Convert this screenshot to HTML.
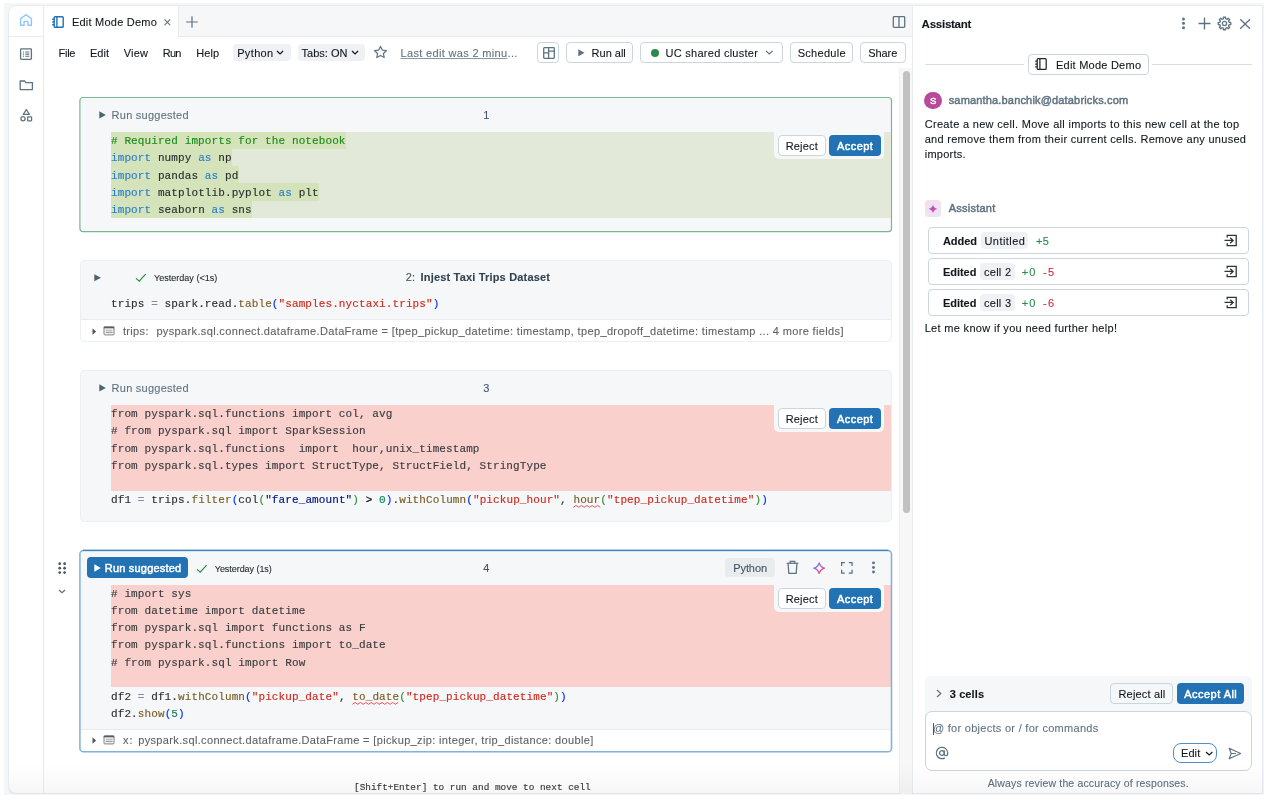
<!DOCTYPE html>
<html><head><meta charset="utf-8"><title>Edit Mode Demo</title>
<style>
#root{left:0;top:0;width:1266px;height:800px;will-change:transform;}
html,body{margin:0;padding:0;background:#fff;}
body{width:1266px;height:800px;overflow:hidden;position:relative;font-family:"Liberation Sans",sans-serif;}
div,span,svg{position:absolute;box-sizing:border-box;}
.t{font-family:"Liberation Sans",sans-serif;white-space:pre;-webkit-text-stroke:0.1px;}
.m{font-family:"Liberation Mono",monospace;white-space:pre;-webkit-text-stroke:0.15px;}
.m i,.t i{font-style:normal;position:static;}
</style></head><body><div id="root">
<div style="left:4px;top:3px;width:1260px;height:792px;background:#f4f6f8;"></div><div style="left:8px;top:5px;width:1255px;height:789px;background:#fff;border:1px solid #e8ecf0;border-radius:8px 0 0 8px;"></div><div style="left:43px;top:6px;width:1px;height:788px;background:#e8ecf0;"></div><div style="left:9px;top:36px;width:34px;height:1px;background:#e8ecf0;"></div><svg style="left:19px;top:13px;" width="14" height="14" viewBox="0 0 14 14"><path d="M1.6 5.6 L7 1.7 L12.4 5.6 V12.2 H8.9 V8.4 H5.1 V12.2 H1.6 Z" fill="none" stroke="#8cc8ff" stroke-width="1.4" stroke-linejoin="round"/></svg><svg style="left:19px;top:47px;" width="14" height="14" viewBox="0 0 14 14"><rect x="1.6" y="1.9" width="10.8" height="10.4" rx="0.8" fill="none" stroke="#5f7281" stroke-width="1.3"/><path d="M4 5h1M6.3 5h4M4 7.1h1M6.3 7.1h4M4 9.2h1M6.3 9.2h4" stroke="#5f7281" stroke-width="1.1"/></svg><svg style="left:19px;top:78px;" width="15" height="14" viewBox="0 0 15 14"><path d="M1.2 3 H5.6 L7 4.6 H13.4 V11.6 H1.2 Z" fill="none" stroke="#5f7281" stroke-width="1.3" stroke-linejoin="round"/></svg><svg style="left:19px;top:108px;" width="15" height="15" viewBox="0 0 15 15"><path d="M7.3 1.5 L10.3 6.4 H4.3 Z" fill="none" stroke="#5f7281" stroke-width="1.25" stroke-linejoin="round"/><circle cx="4" cy="10.8" r="2.1" fill="none" stroke="#5f7281" stroke-width="1.25"/><rect x="8.6" y="8.8" width="4" height="4" rx="0.5" fill="none" stroke="#5f7281" stroke-width="1.25"/></svg><div style="left:44px;top:6px;width:868px;height:30px;background:#f6f7f9;"></div><div style="left:44px;top:36px;width:868px;height:1px;background:#e8ecf0;"></div><div style="left:44px;top:6px;width:134px;height:31px;background:#fff;"></div><div style="left:178px;top:6px;width:1px;height:30px;background:#e8ecf0;"></div><svg style="left:51px;top:14.7px;" width="14" height="14" viewBox="0 0 14 14"><rect x="3.2" y="1.7" width="9" height="10.6" rx="0.9" fill="none" stroke="#2272b4" stroke-width="1.4"/><path d="M5.9 1.7V12.3" stroke="#2272b4" stroke-width="1.4"/><path d="M1.2 4.2H3.2M1.2 7H3.2M1.2 9.8H3.2" stroke="#2272b4" stroke-width="1.4"/></svg><span class="t" style="left:71.90px;top:16.89px;font-size:11px;line-height:11px;color:#11171c;letter-spacing:0.236px;">Edit Mode Demo</span><svg style="left:163px;top:17.5px;" width="9" height="9" viewBox="0 0 9 9"><path d="M1.5 1.4 L7.2 7.2 M7.2 1.4 L1.5 7.2" stroke="#5f7281" stroke-width="1.1" fill="none"/></svg><svg style="left:185px;top:15px;" width="14" height="14" viewBox="0 0 14 14"><path d="M7 1.2V12.8M1.2 7H12.8" stroke="#5f7281" stroke-width="1.2"/></svg><svg style="left:891.5px;top:14.8px;" width="14" height="14" viewBox="0 0 14 14"><rect x="1.3" y="1.6" width="11.4" height="10.8" rx="0.8" fill="none" stroke="#5f7281" stroke-width="1.3"/><path d="M7 1.6V12.4" stroke="#5f7281" stroke-width="1.3"/></svg><span class="t" style="left:58.40px;top:48.09px;font-size:11px;line-height:11px;color:#11171c;letter-spacing:-0.211px;">File</span><span class="t" style="left:90.00px;top:48.09px;font-size:11px;line-height:11px;color:#11171c;letter-spacing:0.010px;">Edit</span><span class="t" style="left:123.70px;top:48.09px;font-size:11px;line-height:11px;color:#11171c;letter-spacing:0.215px;">View</span><span class="t" style="left:162.70px;top:48.09px;font-size:11px;line-height:11px;color:#11171c;letter-spacing:-0.744px;">Run</span><span class="t" style="left:196.30px;top:48.09px;font-size:11px;line-height:11px;color:#11171c;letter-spacing:0.025px;">Help</span><div style="left:233.4px;top:44px;width:57.2px;height:17px;background:#eff1f4;border-radius:4px;"></div><span class="t" style="left:237.20px;top:48.09px;font-size:11px;line-height:11px;color:#11171c;letter-spacing:0.350px;">Python</span><svg style="left:276.3px;top:49.8px;" width="8.1" height="5.5" viewBox="0 0 8.1 5.5"><path d="M1 1 L4.05 3.9 L7.1 1" fill="none" stroke="#11171c" stroke-width="1.25"/></svg><div style="left:297.7px;top:44px;width:67.1px;height:17px;background:#eff1f4;border-radius:4px;"></div><span class="t" style="left:301.60px;top:48.09px;font-size:11px;line-height:11px;color:#11171c;letter-spacing:0.006px;">Tabs: ON</span><svg style="left:351.3px;top:49.8px;" width="8.1" height="5.5" viewBox="0 0 8.1 5.5"><path d="M1 1 L4.05 3.9 L7.1 1" fill="none" stroke="#11171c" stroke-width="1.25"/></svg><svg style="left:373px;top:45px;" width="15" height="14" viewBox="0 0 15 14"><path d="M7.5 1.4 L9.3 5.1 L13.4 5.7 L10.4 8.5 L11.2 12.5 L7.5 10.5 L3.8 12.5 L4.6 8.5 L1.6 5.7 L5.7 5.1 Z" fill="none" stroke="#5f7281" stroke-width="1.25" stroke-linejoin="round"/></svg><span class="t" style="left:400.50px;top:48.09px;font-size:11px;line-height:11px;color:#5f7281;letter-spacing:0.338px;"><i style="text-decoration:underline;text-underline-offset:0.6px;text-decoration-thickness:0.9px;text-decoration-color:#8898a5">Last edit was 2 minu</i>...</span><div style="left:537px;top:42px;width:22px;height:21px;background:#fff;border:1px solid #cbd5de;border-radius:4px;"></div><svg style="left:541.5px;top:45.7px;" width="14" height="14" viewBox="0 0 14 14"><rect x="1.7" y="1.7" width="10.6" height="10.6" rx="0.7" fill="none" stroke="#5f7281" stroke-width="1.3"/><path d="M6.6 1.7V12.3M1.7 6.8H6.6M6.6 5.2H12.3" stroke="#5f7281" stroke-width="1.3"/></svg><div style="left:566px;top:42px;width:67px;height:21px;background:#fff;border:1px solid #cbd5de;border-radius:4px;"></div><svg style="left:578.3px;top:48.8px;" width="6.7" height="7.7" viewBox="0 0 6.7 7.7"><path d="M0.3 0.3 L6.5 3.85 L0.3 7.4 Z" fill="#5f7281"/></svg><span class="t" style="left:591.60px;top:48.09px;font-size:11px;line-height:11px;color:#11171c;letter-spacing:-0.008px;">Run all</span><div style="left:640px;top:42px;width:143px;height:21px;background:#fff;border:1px solid #cbd5de;border-radius:4px;"></div><div style="left:651px;top:48.6px;width:8px;height:8px;border-radius:50%;background:#2b8a4a;"></div><span class="t" style="left:665.60px;top:48.09px;font-size:11px;line-height:11px;color:#11171c;letter-spacing:0.266px;">UC shared cluster</span><svg style="left:764.6px;top:50.2px;" width="8.6" height="5.6" viewBox="0 0 8.6 5.6"><path d="M1 1 L4.3 3.9999999999999996 L7.6 1" fill="none" stroke="#5f7281" stroke-width="1.1"/></svg><div style="left:790px;top:42px;width:63px;height:21px;background:#fff;border:1px solid #cbd5de;border-radius:4px;"></div><span class="t" style="left:797.70px;top:48.09px;font-size:11px;line-height:11px;color:#11171c;letter-spacing:0.289px;">Schedule</span><div style="left:860px;top:42px;width:46px;height:21px;background:#fff;border:1px solid #cbd5de;border-radius:4px;"></div><span class="t" style="left:868.20px;top:48.09px;font-size:11px;line-height:11px;color:#11171c;letter-spacing:-0.065px;">Share</span><div style="left:899px;top:68px;width:13px;height:726px;background:#f7f7f7;border-left:1px solid #efefef;"></div><div style="left:903px;top:70.5px;width:7px;height:442.5px;background:#c1c1c1;border-radius:3.5px;"></div><div style="left:80px;top:98px;width:811.5px;height:133.4px;background:#f6f7f9;border-radius:4px;"></div><svg style="left:77px;top:95px;" width="818" height="140" viewBox="0 0 818 140"><rect x="2.9" y="2.5" width="811.6" height="134.1" rx="3" fill="none" stroke="#7ab693" stroke-width="1.2"/></svg><svg style="left:98.8px;top:111.3px;" width="7" height="7.8" viewBox="0 0 7 7.8"><path d="M0.3 0.3 L6.8 3.9 L0.3 7.5 Z" fill="#4c6373"/></svg><span class="t" style="left:111.60px;top:110.39px;font-size:11px;line-height:11px;color:#5f7281;letter-spacing:0.250px;">Run suggested</span><span class="t" style="left:483.20px;top:110.39px;font-size:11px;line-height:11px;color:#445461;">1</span><div style="left:111px;top:132px;width:780px;height:85.60000000000001px;background:#e2e9d8;"></div><div style="left:111px;top:132.0px;width:234.8px;height:17.17px;background:#d4e3b9;"></div><div style="left:111px;top:149.12px;width:120.9px;height:17.17px;background:#d4e3b9;"></div><div style="left:111px;top:166.24px;width:127.6px;height:17.17px;background:#d4e3b9;"></div><div style="left:111px;top:183.36px;width:208.00000000000003px;height:17.17px;background:#d4e3b9;"></div><div style="left:111px;top:200.48000000000002px;width:141.00000000000003px;height:17.17px;background:#d4e3b9;"></div><span class="m" style="left:111.00px;top:136.27px;font-size:11px;line-height:11px;color:#2b2f33;letter-spacing:0.1px;"><i style="color:#1c8c1c"># Required imports for the notebook</i></span><span class="m" style="left:111.00px;top:153.39px;font-size:11px;line-height:11px;color:#2b2f33;letter-spacing:0.1px;"><i style="color:#2b7fcf">import</i> numpy <i style="color:#2b7fcf">as</i> np</span><span class="m" style="left:111.00px;top:170.51px;font-size:11px;line-height:11px;color:#2b2f33;letter-spacing:0.1px;"><i style="color:#2b7fcf">import</i> pandas <i style="color:#2b7fcf">as</i> pd</span><span class="m" style="left:111.00px;top:187.63px;font-size:11px;line-height:11px;color:#2b2f33;letter-spacing:0.1px;"><i style="color:#2b7fcf">import</i> matplotlib.pyplot <i style="color:#2b7fcf">as</i> plt</span><span class="m" style="left:111.00px;top:204.75px;font-size:11px;line-height:11px;color:#2b2f33;letter-spacing:0.1px;"><i style="color:#2b7fcf">import</i> seaborn <i style="color:#2b7fcf">as</i> sns</span><div style="left:773.9px;top:132px;width:110.4px;height:27.2px;background:#f6f7f9;border-radius:0 0 5px 5px;"></div><div style="left:778px;top:135px;width:47.5px;height:21.3px;background:#fff;border:1px solid #cbd5de;border-radius:4px;"></div><span class="t" style="left:785.70px;top:141.19px;font-size:11px;line-height:11px;color:#11171c;letter-spacing:0.183px;">Reject</span><div style="left:829.2px;top:135.3px;width:51.5px;height:20.9px;background:#2272b4;border-radius:4px;"></div><span class="t" style="left:837.10px;top:141.19px;font-size:11px;line-height:11px;-webkit-text-stroke:0.45px #fff;color:#fff;letter-spacing:0.432px;">Accept</span><div style="left:79.5px;top:259.8px;width:812px;height:82.6px;background:#fff;border:1px solid #ebeff2;border-radius:4.5px;"></div><div style="left:80.5px;top:260.8px;width:810px;height:58.2px;background:#f6f7f9;border-radius:3.5px 3.5px 0 0;"></div><div style="left:80.5px;top:319px;width:810px;height:1px;background:#e8ecf0;"></div><svg style="left:94.2px;top:274.1px;" width="7.3" height="7.5" viewBox="0 0 7.3 7.5"><path d="M0.3 0.3 L7.1 3.75 L0.3 7.2 Z" fill="#4c6373"/></svg><svg style="left:135.3px;top:273px;" width="12" height="10" viewBox="0 0 12 10"><path d="M1 5.4 L4.2 8.2 L10.6 1.2" fill="none" stroke="#2b8a4a" stroke-width="1.15"/></svg><span class="t" style="left:154.00px;top:274.18px;font-size:9px;line-height:9px;color:#1f272d;letter-spacing:0.018px;">Yesterday (&lt;1s)</span><span class="t" style="left:405.70px;top:272.39px;font-size:11px;line-height:11px;color:#445461;letter-spacing:0.312px;">2:</span><span class="t" style="left:420.50px;top:272.39px;font-size:11px;line-height:11px;font-weight:700;color:#33434f;letter-spacing:0.182px;">Injest Taxi Trips Dataset</span><span class="m" style="left:111.00px;top:298.87px;font-size:11px;line-height:11px;color:#2b2f33;letter-spacing:0.1px;">trips <i style="color:#7a8fa3">=</i> spark.read.<i style="color:#795e26">table</i><i style="color:#0431fa">(</i><i style="color:#d12a1d">&quot;samples.nyctaxi.trips&quot;</i><i style="color:#0431fa">)</i></span><svg style="left:91.5px;top:327.5px;" width="5" height="7.2" viewBox="0 0 5 7.2"><path d="M0.5 0.5 L4.2 3.6 L0.5 6.7 Z" fill="#555"/></svg><svg style="left:102.9px;top:325.6px;" width="12" height="10" viewBox="0 0 12 10"><rect x="1" y="0.9" width="10" height="8" rx="0.9" fill="#fdfdfd" stroke="#707070" stroke-width="0.9"/><path d="M0.8 1.5H11.2" stroke="#5c5c5c" stroke-width="1.7"/><path d="M2.6 4.2H9.6" stroke="#a5a5a5" stroke-width="1"/><path d="M2.6 6.4H9.6" stroke="#a0a0a0" stroke-width="1.5"/></svg><span class="t" style="left:122.90px;top:325.79px;font-size:11px;line-height:11px;color:#616161;letter-spacing:0.351px;">trips:</span><span class="t" style="left:156.40px;top:325.79px;font-size:11px;line-height:11px;color:#616161;letter-spacing:0.357px;">pyspark.sql.connect.dataframe.DataFrame = [tpep_pickup_datetime: timestamp, tpep_dropoff_datetime: timestamp ... 4 more fields]</span><div style="left:79.5px;top:370.3px;width:812px;height:151.3px;background:#f6f7f9;border:1px solid #ebeff2;border-radius:4.5px;"></div><svg style="left:98.7px;top:384.4px;" width="7" height="7.8" viewBox="0 0 7 7.8"><path d="M0.3 0.3 L6.8 3.9 L0.3 7.5 Z" fill="#4c6373"/></svg><span class="t" style="left:111.60px;top:383.19px;font-size:11px;line-height:11px;color:#5f7281;letter-spacing:0.250px;">Run suggested</span><span class="t" style="left:483.20px;top:383.19px;font-size:11px;line-height:11px;color:#445461;">3</span><div style="left:111px;top:405px;width:780px;height:85.60000000000001px;background:#f9d0cc;"></div><span class="m" style="left:111.00px;top:409.37px;font-size:11px;line-height:11px;color:#2b2f33;letter-spacing:0.1px;"><i style="color:#3a3d40">from pyspark.sql.functions import col, avg</i></span><span class="m" style="left:111.00px;top:426.49px;font-size:11px;line-height:11px;color:#2b2f33;letter-spacing:0.1px;"><i style="color:#3a3d40"># from pyspark.sql import SparkSession</i></span><span class="m" style="left:111.00px;top:443.61px;font-size:11px;line-height:11px;color:#2b2f33;letter-spacing:0.1px;"><i style="color:#3a3d40">from pyspark.sql.functions  import  hour,unix_timestamp</i></span><span class="m" style="left:111.00px;top:460.73px;font-size:11px;line-height:11px;color:#2b2f33;letter-spacing:0.1px;"><i style="color:#3a3d40">from pyspark.sql.types import StructType, StructField, StringType</i></span><span class="m" style="left:111.00px;top:494.97px;font-size:11px;line-height:11px;color:#2b2f33;letter-spacing:0.1px;">df1 <i style="color:#7a8fa3">=</i> trips.<i style="color:#795e26">filter</i><i style="color:#0431fa">(</i>col<i style="color:#319331">(</i><i style="color:#001080">&quot;fare_amount&quot;</i><i style="color:#319331">)</i><i style="color:#000"> &gt; </i><i style="color:#098658">0</i><i style="color:#0431fa">)</i>.<i style="color:#795e26">withColumn</i><i style="color:#0431fa">(</i><i style="color:#d12a1d">&quot;pickup_hour&quot;</i>, <i style="color:#795e26">hour</i><i style="color:#319331">(</i><i style="color:#d12a1d">&quot;tpep_pickup_datetime&quot;</i><i style="color:#319331">)</i><i style="color:#0431fa">)</i></span><svg style="left:572.5999999999999px;top:505.20000000000005px;" width="28.8" height="3.2" viewBox="0 0 28.8 3.2"><path d="M0.30 2.30 L3.00 0.50 L5.70 2.30 L8.40 0.50 L11.10 2.30 L13.80 0.50 L16.50 2.30 L19.20 0.50 L21.90 2.30 L24.60 0.50 L27.30 2.30" fill="none" stroke="#e8525c" stroke-width="1" stroke-linejoin="round"/></svg><div style="left:773.9px;top:405px;width:110.4px;height:27.2px;background:#f6f7f9;border-radius:0 0 5px 5px;"></div><div style="left:778px;top:408px;width:47.5px;height:21.3px;background:#fff;border:1px solid #cbd5de;border-radius:4px;"></div><span class="t" style="left:785.70px;top:414.19px;font-size:11px;line-height:11px;color:#11171c;letter-spacing:0.183px;">Reject</span><div style="left:829.2px;top:408.3px;width:51.5px;height:20.9px;background:#2272b4;border-radius:4px;"></div><span class="t" style="left:837.10px;top:414.19px;font-size:11px;line-height:11px;-webkit-text-stroke:0.45px #fff;color:#fff;letter-spacing:0.432px;">Accept</span><div style="left:80px;top:550.4px;width:811.5px;height:201px;background:#fff;border-radius:4px;"></div><div style="left:80px;top:550.4px;width:811.5px;height:178.6px;background:#f6f7f9;border-radius:3.5px 3.5px 0 0;"></div><div style="left:80px;top:729px;width:811.5px;height:1px;background:#e8ecf0;"></div><svg style="left:58px;top:561.9px;" width="9" height="13" viewBox="0 0 9 13"><circle cx="1.7" cy="1.7" r="1.35" fill="#445461"/><circle cx="1.7" cy="6.15" r="1.35" fill="#445461"/><circle cx="1.7" cy="10.6" r="1.35" fill="#445461"/><circle cx="6.6000000000000005" cy="1.7" r="1.35" fill="#445461"/><circle cx="6.6000000000000005" cy="6.15" r="1.35" fill="#445461"/><circle cx="6.6000000000000005" cy="10.6" r="1.35" fill="#445461"/></svg><svg style="left:58.3px;top:589.3px;" width="8" height="5.4" viewBox="0 0 8 5.4"><path d="M1 1 L4.0 3.8000000000000003 L7 1" fill="none" stroke="#5f7281" stroke-width="1.2"/></svg><div style="left:86.9px;top:557.3px;width:101.5px;height:20.5px;background:#2272b4;border-radius:4px;"></div><svg style="left:94.3px;top:563.8px;" width="7" height="8" viewBox="0 0 7 8"><path d="M0.3 0.3 L6.8 4.0 L0.3 7.7 Z" fill="#fff"/></svg><span class="t" style="left:104.80px;top:562.89px;font-size:11px;line-height:11px;-webkit-text-stroke:0.45px #fff;color:#fff;letter-spacing:0.200px;">Run suggested</span><svg style="left:196.2px;top:563.8px;" width="12" height="10" viewBox="0 0 12 10"><path d="M1 5.4 L4.2 8.2 L10.6 1.2" fill="none" stroke="#2b8a4a" stroke-width="1.15"/></svg><span class="t" style="left:214.80px;top:564.78px;font-size:9px;line-height:9px;color:#1f272d;letter-spacing:-0.054px;">Yesterday (1s)</span><span class="t" style="left:483.20px;top:562.99px;font-size:11px;line-height:11px;color:#445461;">4</span><div style="left:725.3px;top:557.6px;width:49.3px;height:19.8px;background:#e8ecef;border-radius:4px;"></div><span class="t" style="left:733.20px;top:562.79px;font-size:11px;line-height:11px;color:#445461;letter-spacing:-0.070px;">Python</span><svg style="left:785.5px;top:560.2px;" width="13" height="15" viewBox="0 0 13 15"><path d="M0.6 3.3H12.4" stroke="#5f7281" stroke-width="1.25"/><path d="M4.2 3.2V1.3H8.8V3.2" fill="none" stroke="#5f7281" stroke-width="1.25"/><path d="M2.1 3.6 L2.8 13.4 H10.2 L10.9 3.6" fill="none" stroke="#5f7281" stroke-width="1.25" stroke-linejoin="round"/></svg><svg style="left:813.2px;top:561.6px" width="12.4" height="12.4" viewBox="0 0 12.4 12.4"><defs><linearGradient id="sg" x1="0.1" y1="0.1" x2="0.9" y2="0.9"><stop offset="0" stop-color="#4f7cff"/><stop offset="0.5" stop-color="#b45ad0"/><stop offset="1" stop-color="#ff4f3a"/></linearGradient></defs><path d="M6.2 0.9 C7 3.7 8.7 5.4 11.5 6.2 C8.7 7 7 8.7 6.2 11.5 C5.4 8.7 3.7 7 0.9 6.2 C3.7 5.4 5.4 3.7 6.2 0.9 Z" fill="none" stroke="url(#sg)" stroke-width="1.25" stroke-linejoin="round"/></svg><svg style="left:840.6px;top:561.9px;" width="12" height="12" viewBox="0 0 12 12"><path d="M0.65 3.9V0.65H3.9M7.8 0.65H11.05V3.9M11.05 7.8V11.05H7.8M3.9 11.05H0.65V7.8" fill="none" stroke="#5f7281" stroke-width="1.3"/></svg><svg style="left:871.4px;top:561.4px;" width="5" height="13" viewBox="0 0 5 13"><circle cx="2.5" cy="1.9" r="1.45" fill="#5f7281"/><circle cx="2.5" cy="6.449999999999999" r="1.45" fill="#5f7281"/><circle cx="2.5" cy="11.0" r="1.45" fill="#5f7281"/></svg><div style="left:111px;top:584.8px;width:779.8px;height:102.2px;background:#f9d0cc;"></div><span class="m" style="left:111.00px;top:589.07px;font-size:11px;line-height:11px;color:#2b2f33;letter-spacing:0.1px;"><i style="color:#3a3d40"># import sys</i></span><span class="m" style="left:111.00px;top:606.19px;font-size:11px;line-height:11px;color:#2b2f33;letter-spacing:0.1px;"><i style="color:#3a3d40">from datetime import datetime</i></span><span class="m" style="left:111.00px;top:623.31px;font-size:11px;line-height:11px;color:#2b2f33;letter-spacing:0.1px;"><i style="color:#3a3d40">from pyspark.sql import functions as F</i></span><span class="m" style="left:111.00px;top:640.43px;font-size:11px;line-height:11px;color:#2b2f33;letter-spacing:0.1px;"><i style="color:#3a3d40">from pyspark.sql.functions import to_date</i></span><span class="m" style="left:111.00px;top:657.55px;font-size:11px;line-height:11px;color:#2b2f33;letter-spacing:0.1px;"><i style="color:#3a3d40"># from pyspark.sql import Row</i></span><span class="m" style="left:111.00px;top:691.79px;font-size:11px;line-height:11px;color:#2b2f33;letter-spacing:0.1px;">df2 <i style="color:#7a8fa3">=</i> df1.<i style="color:#795e26">withColumn</i><i style="color:#0431fa">(</i><i style="color:#d12a1d">&quot;pickup_date&quot;</i>, <i style="color:#795e26">to_date</i><i style="color:#319331">(</i><i style="color:#d12a1d">&quot;tpep_pickup_datetime&quot;</i><i style="color:#319331">)</i><i style="color:#0431fa">)</i></span><svg style="left:351.50000000000006px;top:702.02px;" width="48.9" height="3.2" viewBox="0 0 48.9 3.2"><path d="M0.30 2.30 L3.00 0.50 L5.70 2.30 L8.40 0.50 L11.10 2.30 L13.80 0.50 L16.50 2.30 L19.20 0.50 L21.90 2.30 L24.60 0.50 L27.30 2.30 L30.00 0.50 L32.70 2.30 L35.40 0.50 L38.10 2.30 L40.80 0.50 L43.50 2.30 L46.20 0.50" fill="none" stroke="#e8525c" stroke-width="1" stroke-linejoin="round"/></svg><span class="m" style="left:111.00px;top:708.91px;font-size:11px;line-height:11px;color:#2b2f33;letter-spacing:0.1px;">df2.<i style="color:#795e26">show</i><i style="color:#0431fa">(</i><i style="color:#098658">5</i><i style="color:#0431fa">)</i></span><div style="left:773.9px;top:584.8px;width:110.4px;height:27.2px;background:#f6f7f9;border-radius:0 0 5px 5px;"></div><div style="left:778px;top:587.8px;width:47.5px;height:21.3px;background:#fff;border:1px solid #cbd5de;border-radius:4px;"></div><span class="t" style="left:785.70px;top:593.99px;font-size:11px;line-height:11px;color:#11171c;letter-spacing:0.183px;">Reject</span><div style="left:829.2px;top:588.0999999999999px;width:51.5px;height:20.9px;background:#2272b4;border-radius:4px;"></div><span class="t" style="left:837.10px;top:593.99px;font-size:11px;line-height:11px;-webkit-text-stroke:0.45px #fff;color:#fff;letter-spacing:0.432px;">Accept</span><svg style="left:77px;top:548px;" width="818" height="208" viewBox="0 0 818 208"><rect x="2.9" y="2.45" width="811.6" height="201.3" rx="3.6" fill="none" stroke="#82b2db" stroke-width="1.55"/><path d="M6 2.4H811.5" stroke="#3a82c0" stroke-width="1.1"/></svg><svg style="left:91.5px;top:737.1px;" width="5" height="7.2" viewBox="0 0 5 7.2"><path d="M0.5 0.5 L4.2 3.6 L0.5 6.7 Z" fill="#555"/></svg><svg style="left:102.9px;top:735.2px;" width="12" height="10" viewBox="0 0 12 10"><rect x="1" y="0.9" width="10" height="8" rx="0.9" fill="#fdfdfd" stroke="#707070" stroke-width="0.9"/><path d="M0.8 1.5H11.2" stroke="#5c5c5c" stroke-width="1.7"/><path d="M2.6 4.2H9.6" stroke="#a5a5a5" stroke-width="1"/><path d="M2.6 6.4H9.6" stroke="#a0a0a0" stroke-width="1.5"/></svg><span class="t" style="left:122.90px;top:735.39px;font-size:11px;line-height:11px;color:#616161;letter-spacing:1.037px;">x:</span><span class="t" style="left:138.20px;top:735.39px;font-size:11px;line-height:11px;color:#616161;letter-spacing:0.350px;">pyspark.sql.connect.dataframe.DataFrame = [pickup_zip: integer, trip_distance: double]</span><span class="m" style="left:354.00px;top:782.79px;font-size:9.4px;line-height:9.4px;color:#3a3a3a;letter-spacing:0.01px;">[Shift+Enter] to run and move to next cell</span><div style="left:912px;top:6px;width:1px;height:788px;background:#e8ecf0;"></div><div style="left:1262.5px;top:6px;width:1px;height:788px;background:#f1f4f7;"></div><span class="t" style="left:921.60px;top:18.77px;font-size:11.5px;line-height:11.5px;font-weight:700;color:#11171c;letter-spacing:-0.248px;">Assistant</span><svg style="left:1181px;top:17px;" width="5" height="13" viewBox="0 0 5 13"><circle cx="2.5" cy="1.9" r="1.5" fill="#5f7281"/><circle cx="2.5" cy="6.35" r="1.5" fill="#5f7281"/><circle cx="2.5" cy="10.8" r="1.5" fill="#5f7281"/></svg><svg style="left:1197.6px;top:16.7px;" width="13" height="13" viewBox="0 0 13 13"><path d="M6.5 0.5V12.5M0.5 6.5H12.5" stroke="#5f7281" stroke-width="1.35"/></svg><svg style="left:1217px;top:15.9px;" width="15" height="15" viewBox="0 0 15 15"><path d="M6.43 1.24 L8.57 1.24 L8.56 2.77 L10.10 3.40 L11.17 2.31 L12.69 3.83 L11.60 4.90 L12.23 6.44 L13.76 6.43 L13.76 8.57 L12.23 8.56 L11.60 10.10 L12.69 11.17 L11.17 12.69 L10.10 11.60 L8.56 12.23 L8.57 13.76 L6.43 13.76 L6.44 12.23 L4.90 11.60 L3.83 12.69 L2.31 11.17 L3.40 10.10 L2.77 8.56 L1.24 8.57 L1.24 6.43 L2.77 6.44 L3.40 4.90 L2.31 3.83 L3.83 2.31 L4.90 3.40 L6.44 2.77 Z" fill="none" stroke="#5f7281" stroke-width="1.3" stroke-linejoin="round"/><circle cx="7.5" cy="7.5" r="2.1" fill="none" stroke="#5f7281" stroke-width="1.25"/></svg><svg style="left:1239px;top:17.6px;" width="12" height="12" viewBox="0 0 12 12"><path d="M1.2 1.2 L11 10.8 M11 1.2 L1.2 10.8" stroke="#5f7281" stroke-width="1.3"/></svg><div style="left:924.5px;top:64px;width:99.3px;height:1px;background:#d5dde4;"></div><div style="left:1152.4px;top:64px;width:99.6px;height:1px;background:#d5dde4;"></div><div style="left:1027.6px;top:54px;width:121.3px;height:21px;background:#fff;border:1px solid #cbd5de;border-radius:4px;"></div><svg style="left:1034.4px;top:57.4px;" width="14" height="14" viewBox="0 0 14 14"><rect x="3.2" y="1.7" width="9" height="10.6" rx="0.9" fill="none" stroke="#1f272d" stroke-width="1.25"/><path d="M5.9 1.7V12.3" stroke="#1f272d" stroke-width="1.25"/><path d="M1.2 4.2H3.2M1.2 7H3.2M1.2 9.8H3.2" stroke="#1f272d" stroke-width="1.25"/></svg><span class="t" style="left:1056.00px;top:59.79px;font-size:11px;line-height:11px;color:#11171c;letter-spacing:0.236px;">Edit Mode Demo</span><div style="left:924.3px;top:91.8px;width:17.4px;height:17.4px;border-radius:50%;background:#b84a9c;"></div><span class="t" style="left:930.00px;top:96.26px;font-size:9.5px;line-height:9.5px;-webkit-text-stroke:0.45px #fff;color:#fff;">S</span><span class="t" style="left:948.70px;top:95.39px;font-size:11px;line-height:11px;-webkit-text-stroke:0.45px #5f7281;color:#5f7281;letter-spacing:0.169px;">samantha.banchik@databricks.com</span><span class="t" style="left:924.70px;top:118.89px;font-size:11px;line-height:11px;color:#11171c;letter-spacing:0.309px;">Create a new cell. Move all imports to this new cell at the top</span><span class="t" style="left:924.70px;top:134.19px;font-size:11px;line-height:11px;color:#11171c;letter-spacing:0.290px;">and remove them from their current cells. Remove any unused</span><span class="t" style="left:924.70px;top:149.39px;font-size:11px;line-height:11px;color:#11171c;letter-spacing:0.268px;">imports.</span><div style="left:924.5px;top:200.3px;width:16.8px;height:16.6px;border-radius:3.5px;background:linear-gradient(135deg,#fbdde6 0%,#f3e1f1 55%,#e4e6f6 100%);"></div><svg style="left:928px;top:203.7px" width="10" height="10" viewBox="0 0 10 10"><defs><linearGradient id="ag" x1="0.15" y1="0.1" x2="0.85" y2="0.95"><stop offset="0" stop-color="#5a5ff0"/><stop offset="0.5" stop-color="#c04fc8"/><stop offset="1" stop-color="#ff5a3c"/></linearGradient></defs><path d="M5 0.6 C5.5 3.2 6.8 4.5 9.4 5 C6.8 5.5 5.5 6.8 5 9.4 C4.5 6.8 3.2 5.5 0.6 5 C3.2 4.5 4.5 3.2 5 0.6 Z" fill="url(#ag)"/></svg><span class="t" style="left:948.70px;top:202.99px;font-size:11px;line-height:11px;-webkit-text-stroke:0.45px #5f7281;color:#5f7281;letter-spacing:0.245px;">Assistant</span><div style="left:928.2px;top:227.2px;width:320.4px;height:26.8px;background:#fff;border:1px solid #cbd5de;border-radius:4px;"></div><span class="t" style="left:942.90px;top:235.79px;font-size:11px;line-height:11px;font-weight:700;color:#11171c;letter-spacing:-0.009px;">Added</span><div style="left:980.8px;top:232.29999999999998px;width:47.7px;height:16.6px;background:#eff1f4;border-radius:4px;"></div><span class="t" style="left:984.50px;top:235.79px;font-size:11px;line-height:11px;color:#11171c;letter-spacing:0.429px;">Untitled</span><span class="t" style="left:1035.90px;top:235.79px;font-size:11px;line-height:11px;color:#2b8a4a;letter-spacing:0.553px;">+5</span><svg style="left:1224px;top:234.39999999999998px;" width="14" height="13" viewBox="0 0 14 13"><path d="M3.2 3.6V1.3H12.2V11.6H3.2V9.3" fill="none" stroke="#2e3338" stroke-width="1.3"/><path d="M0.5 6.45H8.8M6.2 3.7L9.1 6.45L6.2 9.2" fill="none" stroke="#2e3338" stroke-width="1.3"/></svg><div style="left:928.2px;top:258.2px;width:320.4px;height:26.8px;background:#fff;border:1px solid #cbd5de;border-radius:4px;"></div><span class="t" style="left:942.90px;top:266.79px;font-size:11px;line-height:11px;font-weight:700;color:#11171c;letter-spacing:-0.025px;">Edited</span><div style="left:980.3px;top:263.3px;width:34.4px;height:16.6px;background:#eff1f4;border-radius:4px;"></div><span class="t" style="left:984.00px;top:266.79px;font-size:11px;line-height:11px;color:#11171c;letter-spacing:0.263px;">cell 2</span><span class="t" style="left:1021.80px;top:266.79px;font-size:11px;line-height:11px;color:#2b8a4a;letter-spacing:0.953px;">+0</span><span class="t" style="left:1043.00px;top:266.79px;font-size:11px;line-height:11px;color:#c82d3c;letter-spacing:1.219px;">-5</span><svg style="left:1224px;top:265.4px;" width="14" height="13" viewBox="0 0 14 13"><path d="M3.2 3.6V1.3H12.2V11.6H3.2V9.3" fill="none" stroke="#2e3338" stroke-width="1.3"/><path d="M0.5 6.45H8.8M6.2 3.7L9.1 6.45L6.2 9.2" fill="none" stroke="#2e3338" stroke-width="1.3"/></svg><div style="left:928.2px;top:289.2px;width:320.4px;height:26.8px;background:#fff;border:1px solid #cbd5de;border-radius:4px;"></div><span class="t" style="left:942.90px;top:297.79px;font-size:11px;line-height:11px;font-weight:700;color:#11171c;letter-spacing:-0.025px;">Edited</span><div style="left:980.3px;top:294.3px;width:34.4px;height:16.6px;background:#eff1f4;border-radius:4px;"></div><span class="t" style="left:984.00px;top:297.79px;font-size:11px;line-height:11px;color:#11171c;letter-spacing:0.263px;">cell 3</span><span class="t" style="left:1021.80px;top:297.79px;font-size:11px;line-height:11px;color:#2b8a4a;letter-spacing:0.953px;">+0</span><span class="t" style="left:1043.00px;top:297.79px;font-size:11px;line-height:11px;color:#c82d3c;letter-spacing:1.219px;">-6</span><svg style="left:1224px;top:296.4px;" width="14" height="13" viewBox="0 0 14 13"><path d="M3.2 3.6V1.3H12.2V11.6H3.2V9.3" fill="none" stroke="#2e3338" stroke-width="1.3"/><path d="M0.5 6.45H8.8M6.2 3.7L9.1 6.45L6.2 9.2" fill="none" stroke="#2e3338" stroke-width="1.3"/></svg><span class="t" style="left:924.70px;top:322.69px;font-size:11px;line-height:11px;color:#11171c;letter-spacing:0.314px;">Let me know if you need further help!</span><div style="left:924.6px;top:675.7px;width:327.1px;height:60px;background:#f6f7f9;border-radius:5px 5px 0 0;"></div><svg style="left:936.4px;top:689.2px;" width="6" height="9" viewBox="0 0 6 9"><path d="M1 1 L4.8 4.5 L1 8" fill="none" stroke="#5f7281" stroke-width="1.2"/></svg><span class="t" style="left:949.80px;top:688.79px;font-size:11px;line-height:11px;font-weight:700;color:#11171c;letter-spacing:0.093px;">3 cells</span><div style="left:1110.4px;top:683.3px;width:63px;height:20.3px;background:#f6f7f9;border:1px solid #cbd5de;border-radius:4px;"></div><span class="t" style="left:1118.50px;top:688.69px;font-size:11px;line-height:11px;color:#11171c;letter-spacing:0.172px;">Reject all</span><div style="left:1176.7px;top:683.3px;width:67.7px;height:20.3px;background:#2272b4;border-radius:4px;"></div><span class="t" style="left:1184.30px;top:688.69px;font-size:11px;line-height:11px;-webkit-text-stroke:0.45px #fff;color:#fff;letter-spacing:0.465px;">Accept All</span><div style="left:924.6px;top:711.4px;width:327.1px;height:59.3px;background:#fff;border:1px solid #cbd5de;border-radius:7px;"></div><div style="left:932.6px;top:722.5px;width:1px;height:12px;background:#4a5560;"></div><span class="t" style="left:932.90px;top:722.89px;font-size:11px;line-height:11px;color:#5f7281;letter-spacing:0.288px;">@ for objects or / for commands</span><svg style="left:935.3px;top:746.2px;" width="14" height="14" viewBox="0 0 14 14"><circle cx="6.9" cy="7" r="2.35" fill="none" stroke="#5f7281" stroke-width="1.25"/><path d="M9.3 4.4V7.9A1.7 1.7 0 0 0 12.7 7.9V7A5.7 5.7 0 1 0 9.9 11.9" fill="none" stroke="#5f7281" stroke-width="1.25"/></svg><div style="left:1172.9px;top:743.1px;width:43.9px;height:20.3px;background:#fff;border:1px solid #4f8fca;border-radius:8px;"></div><span class="t" style="left:1181.00px;top:748.19px;font-size:11px;line-height:11px;color:#11171c;letter-spacing:0.077px;">Edit</span><svg style="left:1204.6px;top:751.3px;" width="8.4" height="5.6" viewBox="0 0 8.4 5.6"><path d="M1 1 L4.2 3.9999999999999996 L7.4 1" fill="none" stroke="#11171c" stroke-width="1.2"/></svg><svg style="left:1227.5px;top:747px;" width="14" height="13" viewBox="0 0 14 13"><path d="M1.2 1.2 L12.6 6.5 L1.2 11.8 L3.2 6.5 Z M3.2 6.5 H8" fill="none" stroke="#5f7281" stroke-width="1.15" stroke-linejoin="round"/></svg><span class="t" style="left:987.70px;top:777.81px;font-size:10.5px;line-height:10.5px;color:#5f7281;letter-spacing:0.156px;">Always review the accuracy of responses.</span><div style="left:9px;top:764px;width:1254px;height:30px;background:linear-gradient(to bottom,rgba(0,0,0,0),rgba(0,0,0,0.035));pointer-events:none;"></div>
</div></body></html>
